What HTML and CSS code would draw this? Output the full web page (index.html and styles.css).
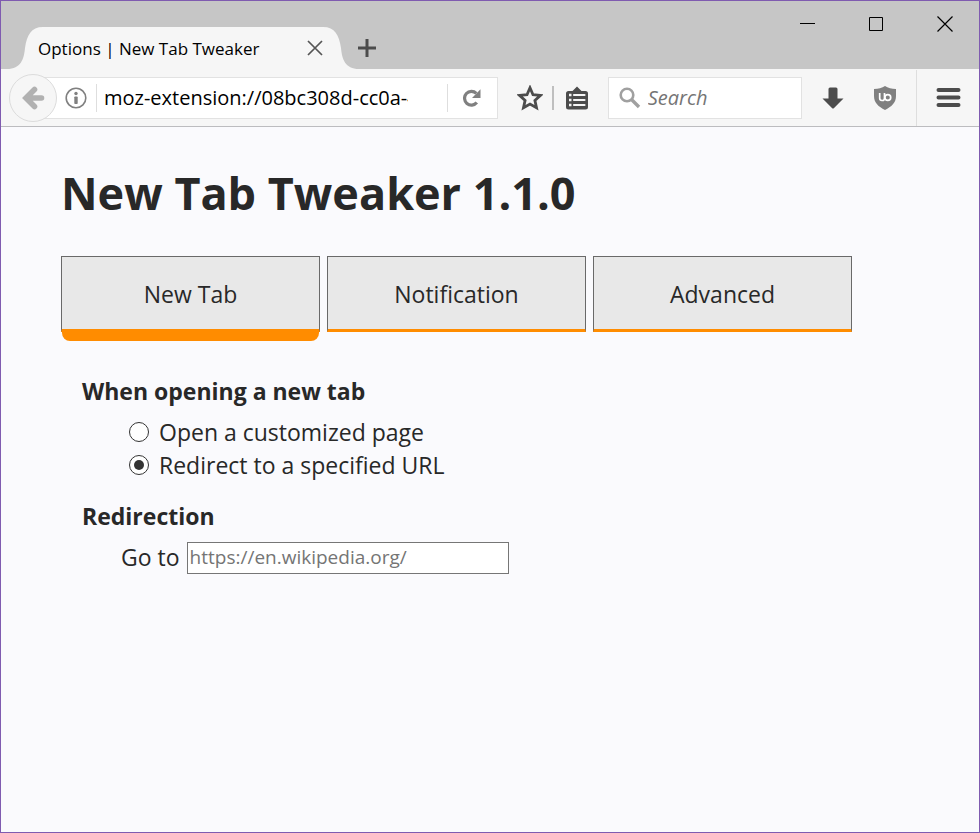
FILE: index.html
```html
<!DOCTYPE html>
<html lang="en">
<head>
<meta charset="utf-8">
<title>Options | New Tab Tweaker</title>
<link rel="stylesheet" href="styles.css">
</head>
<body>
<div class="window">
  <header class="titlebar">
    <div class="tab">
      <svg class="tab-edge tab-edge-left" width="36" height="42" viewBox="0 0 36 42" aria-hidden="true"><path d="M0 42C14 42 17 32 18 21C20 8 24 0 36 0V42Z"/></svg>
      <span class="tab-title">Options | New Tab Tweaker</span>
      <button class="tab-close" type="button" aria-label="Close tab"><svg width="16" height="16" viewBox="0 0 16 16"><path d="M1 1L15 15M15 1L1 15" stroke="#555" stroke-width="1.7"/></svg></button>
      <svg class="tab-edge tab-edge-right" width="36" height="42" viewBox="0 0 36 42" aria-hidden="true"><path d="M36 42C22 42 19 32 18 21C16 8 12 0 0 0V42Z"/></svg>
    </div>
    <button class="new-tab" type="button" aria-label="Open a new tab"><svg width="18" height="18" viewBox="0 0 18 18"><path d="M9 0V18M0 9H18" stroke="#4c4c4c" stroke-width="3"/></svg></button>
    <div class="window-buttons">
      <button type="button" aria-label="Minimize"><svg width="16" height="16" viewBox="0 0 16 16"><path d="M1 7.5H16" stroke="#000"/></svg></button>
      <button type="button" aria-label="Maximize"><svg width="16" height="16" viewBox="0 0 16 16"><path d="M1.5 1.5H14.500V14.500H1.500Z" fill="none" stroke="#000"/></svg></button>
      <button type="button" aria-label="Close"><svg width="16" height="16" viewBox="0 0 16 16"><path d="M.5 .5L15.500 15.500M15.500 .5L.5 15.500" stroke="#000" stroke-width="1.200"/></svg></button>
    </div>
  </header>

  <nav class="toolbar">
    <button class="back" type="button" aria-label="Back"><svg width="24" height="24" viewBox="0 0 24 24"><path d="M13.500 3.500L5 12L13.500 20.500M6 12H20.500" fill="none" stroke="#b1b1b1" stroke-width="5.600" stroke-linejoin="miter" stroke-linecap="round"/></svg></button>
    <div class="url-bar">
      <button class="identity" type="button" aria-label="Site information"><svg width="22" height="22" viewBox="0 0 22 22"><circle cx="11" cy="11" r="9.800" fill="none" stroke="#808080" stroke-width="1.600"/><circle cx="11" cy="6.500" r="1.700" fill="#808080"/><rect x="9.300" y="9.500" width="3.400" height="7.500" rx=".8" fill="#808080"/></svg></button>
      <input class="url" type="text" aria-label="Address" value="moz-extension://08bc308d-cc0a-4">
      <button class="reload" type="button" aria-label="Reload"><svg width="18" height="18" viewBox="0 0 18 18"><path d="M13.800 13.600A6.900 6.900 0 1 1 13.300 4.300" fill="none" stroke="#808080" stroke-width="3.200"/><path d="M17.500 .3V9H9Z" fill="#808080"/></svg></button>
    </div>
    <div class="bookmarks">
      <button class="star" type="button" aria-label="Bookmark this page"><svg width="26" height="26" viewBox="0 0 26 26"><path d="M13 2.800L16 9.700L23.400 10.400L17.900 15.400L19.500 22.700L13 19L6.500 22.700L8.100 15.400L2.600 10.400L10 9.700Z" fill="none" stroke="#4c4c4c" stroke-width="2.800"/></svg></button>
      <button class="list" type="button" aria-label="Show bookmarks"><svg width="22" height="24" viewBox="0 0 22 24"><path d="M11 .5L15.500 5H19.500Q22 5 22 7.500V21Q22 23.500 19.500 23.500H2.500Q0 23.500 0 21V7.500Q0 5 2.500 5H6.500Z" fill="#4c4c4c"/><path d="M8 9H18.500M8 14H18.500M8 19H18.500" stroke="#f6f6f6" stroke-width="2.200" stroke-linecap="round"/><path d="M3 9H5.500M3 14H5.500M3 19H5.500" stroke="#f6f6f6" stroke-width="2.600"/></svg></button>
    </div>
    <div class="search">
      <svg width="22" height="22" viewBox="0 0 22 22" aria-hidden="true"><circle cx="8" cy="8" r="6.300" fill="none" stroke="#a0a0a0" stroke-width="2.600"/><path d="M12.500 12.500L20 20" stroke="#a0a0a0" stroke-width="3.400"/></svg>
      <input type="search" aria-label="Search" placeholder="Search">
    </div>
    <div class="extras">
      <button type="button" aria-label="Downloads"><svg width="22" height="22" viewBox="0 0 22 22"><path d="M8 .5H14Q15.500 .5 15.500 2V11.500H21.500L11.800 21.200Q11 22 10.200 21.200L.5 11.500H6.500V2Q6.500 .5 8 .5Z" fill="#4c4c4c"/></svg></button>
      <button type="button" aria-label="uBlock Origin"><svg width="22" height="24" viewBox="0 0 22 24"><path d="M11 0Q15.500 3 22 3V10C22 17 17.500 20.500 11 24C4.500 20.500 0 17 0 10V3Q6.500 3 11 0Z" fill="#808080"/><path d="M5.700 7V12.300Q5.700 14.500 8 14.500H8.500Q10.500 14.500 10.500 12V7" fill="none" stroke="#fff" stroke-width="1.700"/><circle cx="13.800" cy="11.500" r="2.900" fill="none" stroke="#fff" stroke-width="1.700"/></svg></button>
    </div>
    <button class="menu" type="button" aria-label="Open menu"><svg width="25" height="20" viewBox="0 0 25 20"><path d="M2.500 2H22.500M2.500 9.500H22.500M2.500 17H22.500" stroke="#4c4c4c" stroke-width="4" stroke-linecap="round"/></svg></button>
  </nav>

  <main class="page">
    <h1>New Tab Tweaker 1.1.0</h1>
    <div class="sections" role="tablist">
      <button class="section-tab selected" type="button" role="tab" aria-selected="true">New Tab</button>
      <button class="section-tab" type="button" role="tab" aria-selected="false">Notification</button>
      <button class="section-tab" type="button" role="tab" aria-selected="false">Advanced</button>
    </div>
    <form class="options">
      <fieldset>
        <legend>When opening a new tab</legend>
        <div class="choices">
          <label><input type="radio" name="mode">Open a customized page</label>
          <label><input type="radio" name="mode" checked>Redirect to a specified URL</label>
        </div>
      </fieldset>
      <fieldset>
        <legend>Redirection</legend>
        <label class="go-to">Go to <input type="text" placeholder="https://en.wikipedia.org/"></label>
      </fieldset>
    </form>
  </main>
</div>
</body>
</html>
```
FILE: styles.css
```css
* { box-sizing: border-box; }

body {
  margin: 0;
  font-family: "Open Sans", "Noto Sans", sans-serif;
  color: #282828;
}

button {
  display: flex;
  align-items: center;
  justify-content: center;
  padding: 0;
  border: 0;
  background: none;
  font: inherit;
  color: inherit;
}

input { font: inherit; margin: 0; }

svg { display: block; flex: none; }

.window {
  display: flex;
  flex-direction: column;
  min-height: 100vh;
  border: 1px solid #7f5bb0;
  background: #fafafd;
}

/* Title bar */
.titlebar {
  display: flex;
  align-items: flex-end;
  height: 68px;
  background: #c6c6c6;
}

.tab {
  position: relative;
  display: flex;
  align-items: center;
  justify-content: space-between;
  width: 280px;
  height: 42px;
  margin-left: 42px;
  background: #f6f6f6;
}

.tab-edge { position: absolute; top: 0; fill: #f6f6f6; }
.tab-edge-left { right: 100%; }
.tab-edge-right { left: 100%; }

.tab-title {
  position: relative;
  margin-left: -5px;
  font-size: 17px;
  color: #000;
  white-space: nowrap;
}

.tab-close { position: relative; width: 16px; height: 42px; }

.new-tab { width: 18px; height: 42px; margin-left: 35px; }

.window-buttons {
  display: flex;
  align-self: flex-start;
  margin-left: auto;
}

.window-buttons button { width: 69px; height: 46px; }

/* Navigation toolbar */
.toolbar {
  display: flex;
  align-items: center;
  height: 58px;
  padding-left: 8px;
  border-bottom: 1px solid #bcbcbf;
  background: #f6f6f6;
}

.back {
  position: relative;
  z-index: 1;
  flex: none;
  width: 48px;
  height: 48px;
  border: 1px solid #dcdcdc;
  border-radius: 50%;
  background: #f6f6f6;
}

.url-bar {
  display: flex;
  flex: 441 1 0;
  align-items: center;
  min-width: 0;
  height: 42px;
  margin-left: -15px;
  padding-left: 12px;
  border: 1px solid #e2e2e2;
  background: #fff;
}

.identity {
  flex: none;
  width: 42px;
  height: 28px;
  border-right: 1px solid #dedede;
}

.url {
  flex: 1;
  min-width: 0;
  height: 40px;
  margin-left: 7px;
  margin-right: 39px;
  padding: 0;
  border: 0;
  background: none;
  font-size: 20px;
  color: #000;
}

.reload {
  flex: none;
  width: 50px;
  height: 28px;
  border-left: 1px solid #dedede;
}

.bookmarks { display: flex; align-items: center; }

.star { width: 54px; height: 24px; padding-left: 9px; border-right: 2px solid #bfbfbf; }
.list { width: 46px; height: 24px; }

.bookmarks .star { margin-left: 2px; }
.bookmarks .list { margin-right: 8px; }

.search {
  display: flex;
  flex: 182 1 0;
  align-items: center;
  gap: 7px;
  min-width: 0;
  height: 42px;
  padding-left: 10px;
  border: 1px solid #e2e2e2;
  background: #fff;
}

.search input {
  flex: 1;
  min-width: 0;
  padding: 0;
  border: 0;
  background: none;
  font-size: 20px;
  font-style: italic;
}

input::placeholder { color: #757575; opacity: 1; }

.extras { display: flex; padding-left: 5px; }
.extras button { width: 52px; height: 42px; }

.menu {
  flex: none;
  width: 63px;
  height: 56px;
  margin-left: 5px;
  border-left: 1px solid #dedede;
}

/* Options page */
.page { padding: 33px 60px; font-size: 23px; line-height: 33px; }

h1 {
  margin: 0 0 30px;
  font-size: 45px;
  line-height: 66px;
}

.sections { display: flex; gap: 7px; }

.section-tab {
  position: relative;
  width: 259px;
  height: 76px;
  padding-top: 2px;
  border: 1px solid #696969;
  border-bottom: 3px solid #ff8c00;
  background: #e8e8e8;
}

.section-tab.selected::after {
  content: "";
  position: absolute;
  top: 100%;
  left: 0;
  right: 0;
  height: 12px;
  border-radius: 0 0 8px 8px;
  background: #ff8c00;
}

.options { padding: 43px 0 0 21px; }

fieldset { min-width: 0; margin: 0 0 18px; padding: 0; border: 0; }

legend { padding: 0; margin-bottom: 8px; font-weight: 700; }

.choices { display: flex; flex-direction: column; align-items: flex-start; padding-left: 47px; }

.choices label { display: flex; align-items: center; gap: 10px; }

.choices input {
  appearance: none;
  display: grid;
  place-items: center;
  width: 20px;
  height: 20px;
  margin-bottom: 2px;
  border: 1px solid #333;
  border-radius: 50%;
  background: #fff;
}

.choices input:checked::before {
  content: "";
  width: 10px;
  height: 10px;
  border-radius: 50%;
  background: #333;
}

.go-to { display: flex; align-items: center; gap: 7px; padding-left: 39px; }

.go-to input {
  width: 322px;
  height: 32px;
  padding: 0 2px;
  border: 1px solid #767676;
  background: #fff;
  font-size: 19px;
}
```
